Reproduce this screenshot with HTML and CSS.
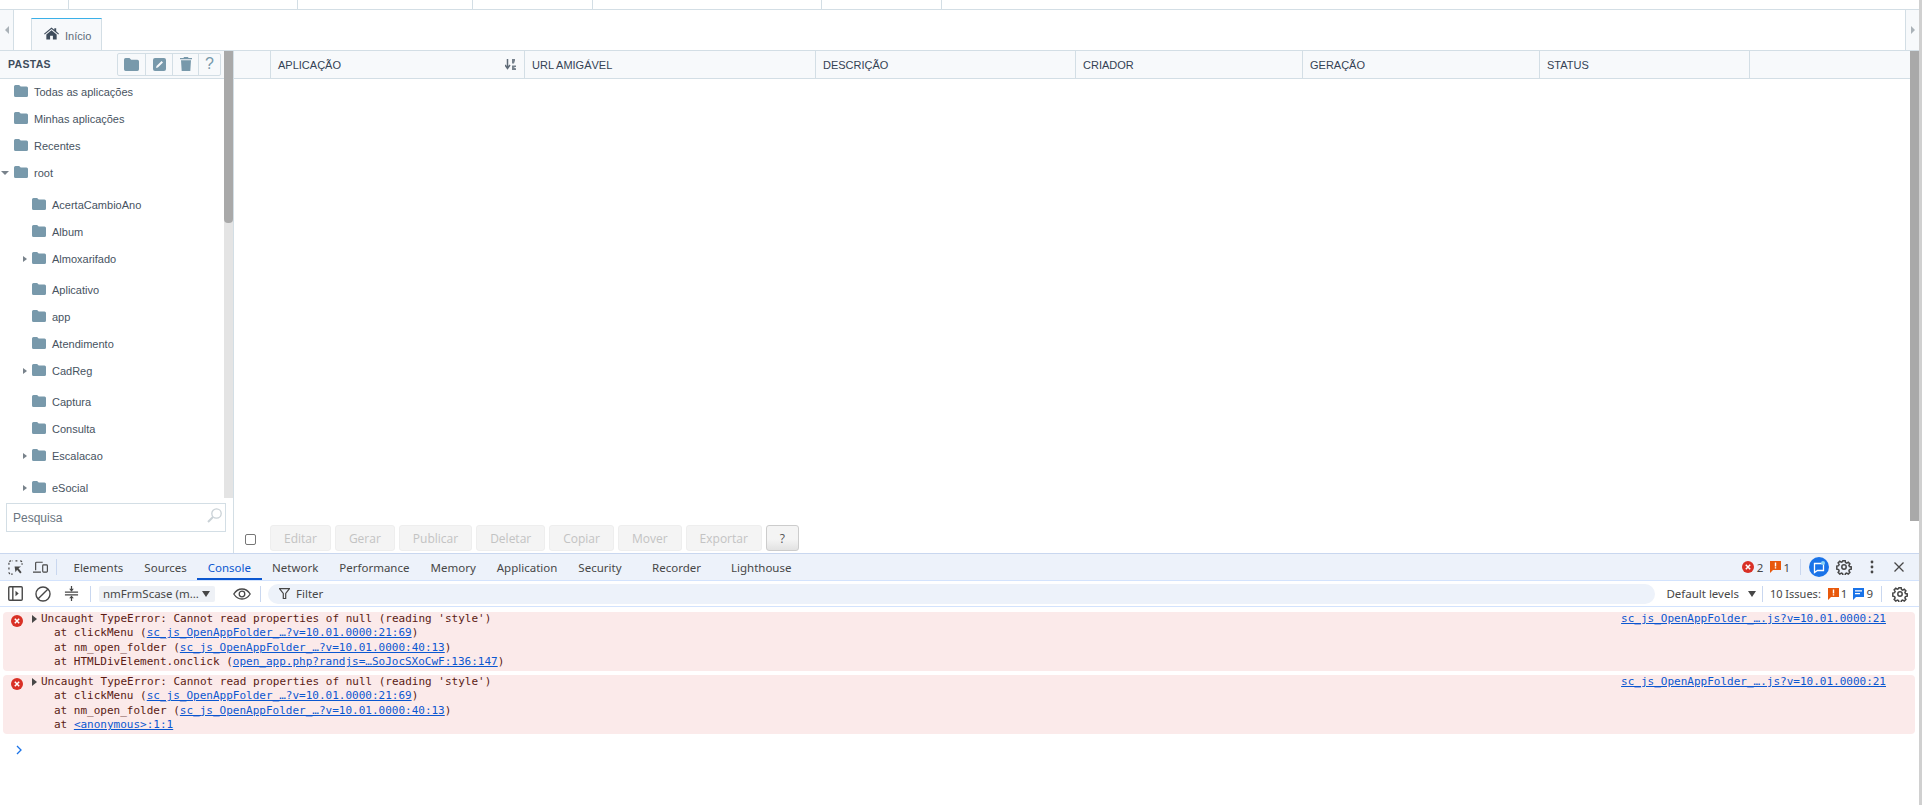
FILE: index.html
```html
<!DOCTYPE html>
<html lang="pt-BR">
<head>
    <meta charset="UTF-8">
    <title>Scriptcase</title>
    <link rel="stylesheet" href="styles.css">
</head>
<body>
    <svg class="defs" width="0" height="0">
        <symbol id="folder" viewBox="0 0 14 12">
            <path d="M1.5 0h3.6l1.6 1.6h5.8A1.5 1.5 0 0 1 14 3.1v7.4a1.5 1.5 0 0 1-1.5 1.5h-11A1.5 1.5 0 0 1 0 10.5v-9A1.5 1.5 0 0 1 1.5 0z"/>
        </symbol>
        <symbol id="err" viewBox="0 0 12 12">
            <circle cx="6" cy="6" r="6" fill="#d93025"/>
            <path d="M3.8 3.8l4.4 4.4M8.2 3.8l-4.4 4.4" stroke="#fff" stroke-width="1.5" fill="none"/>
        </symbol>
        <symbol id="flag-orange" viewBox="0 0 11 12">
            <path d="M0 0h11v9H3l-3 3z" fill="#e8590c"/>
            <path d="M4.8 1.5h1.4v4H4.8zM4.8 6.2h1.4v1.4H4.8z" fill="#fff"/>
        </symbol>
        <symbol id="flag-blue" viewBox="0 0 11 12">
            <path d="M0 0h11v9H3l-3 3z" fill="#1a73e8"/>
            <path d="M2 2.3h7v1.2H2zM2 5h5v1.2H2z" fill="#fff"/>
        </symbol>
        <symbol id="gear" viewBox="0 0 16 16">
            <path d="M6.7 1h2.6l.4 2 1.3.6 1.8-1.1 1.8 1.9-1.1 1.7.6 1.4 2 .4v2.6l-2 .4-.6 1.4 1.1 1.7-1.8 1.9-1.8-1.1-1.3.6-.4 2H6.7l-.4-2-1.3-.6-1.8 1.1-1.8-1.9 1.1-1.7-.6-1.4-2-.4V6.9l2-.4.6-1.4-1.1-1.7 1.8-1.9 1.8 1.1 1.3-.6z" transform="translate(.9 .9) scale(.89)" fill="none" stroke="#474747" stroke-width="1.7"/>
            <circle cx="8" cy="8" r="2.2" fill="none" stroke="#474747" stroke-width="1.5"/>
        </symbol>
    </svg>

    <div class="page">
        <div class="top-strip">
            <div class="strip-cell w1"></div>
            <div class="strip-cell w2"></div>
            <div class="strip-cell w3"></div>
            <div class="strip-cell w4"></div>
            <div class="strip-cell w5"></div>
            <div class="strip-cell w6"></div>
        </div>

        <div class="tabs">
            <div class="tab-arrow left"><span class="tri-left"></span></div>
            <div class="tab">
                <svg class="home" viewBox="0 0 16 13"><path d="M8 0l3 2.5V1h2v3.2L16 6.700l-.8.9L8 1.700.8 7.600 0 6.700zM8 3l5.500 4.500V13H9.500V9h-3v4H2.500V7.500z" fill="#3f4d5c"/></svg>
                <span>Início</span>
            </div>
            <div class="tab-space"></div>
            <div class="tab-arrow right"><span class="tri-right"></span></div>
        </div>

        <div class="main">
            <div class="sidebar">
                <div class="side-upper">
                    <div class="side-col">
                        <div class="side-head">
                            <span class="side-title">PASTAS</span>
                            <div class="btn-group">
                                <div class="group-btn wide">
                                    <svg class="ico16" viewBox="0 0 14 12"><use href="#folder"/></svg>
                                </div>
                                <div class="group-btn">
                                    <svg class="ico13" viewBox="0 0 13 13"><path fill-rule="evenodd" d="M2 0h9a2 2 0 0 1 2 2v9a2 2 0 0 1-2 2H2a2 2 0 0 1-2-2V2a2 2 0 0 1 2-2zm6.600 3L3.500 8.100 3 10l1.900-.5L10 4.400z"/></svg>
                                </div>
                                <div class="group-btn narrow">
                                    <svg class="ico-trash" viewBox="0 0 12 14"><path d="M4 0h4l.5 1H12v1.300H0V1h3.500zM1 3.200h10L10.300 14H1.700z"/></svg>
                                </div>
                                <div class="group-btn help">?</div>
                            </div>
                        </div>
                        <div class="tree">
                            <div class="row"><span class="twisty"></span><svg class="fld"><use href="#folder"/></svg>Todas as aplicações</div>
                            <div class="row"><span class="twisty"></span><svg class="fld"><use href="#folder"/></svg>Minhas aplicações</div>
                            <div class="row"><span class="twisty"></span><svg class="fld"><use href="#folder"/></svg>Recentes</div>
                            <div class="row open wide-gap"><span class="twisty"><i class="tri-down"></i></span><svg class="fld"><use href="#folder"/></svg>root</div>
                            <div class="row child"><span class="twisty"></span><svg class="fld"><use href="#folder"/></svg>AcertaCambioAno</div>
                            <div class="row child"><span class="twisty"></span><svg class="fld"><use href="#folder"/></svg>Album</div>
                            <div class="row child open"><span class="twisty"><i class="tri-right small"></i></span><svg class="fld"><use href="#folder"/></svg>Almoxarifado</div>
                            <div class="row child"><span class="twisty"></span><svg class="fld"><use href="#folder"/></svg>Aplicativo</div>
                            <div class="row child"><span class="twisty"></span><svg class="fld"><use href="#folder"/></svg>app</div>
                            <div class="row child"><span class="twisty"></span><svg class="fld"><use href="#folder"/></svg>Atendimento</div>
                            <div class="row child open"><span class="twisty"><i class="tri-right small"></i></span><svg class="fld"><use href="#folder"/></svg>CadReg</div>
                            <div class="row child"><span class="twisty"></span><svg class="fld"><use href="#folder"/></svg>Captura</div>
                            <div class="row child"><span class="twisty"></span><svg class="fld"><use href="#folder"/></svg>Consulta</div>
                            <div class="row child open wide-gap"><span class="twisty"><i class="tri-right small"></i></span><svg class="fld"><use href="#folder"/></svg>Escalacao</div>
                            <div class="row child"><span class="twisty"><i class="tri-right small"></i></span><svg class="fld"><use href="#folder"/></svg>eSocial</div>
                        </div>
                    </div>
                    <div class="scrollbar side-scroll"><div class="thumb"></div></div>
                </div>
                <div class="search">
                    <span>Pesquisa</span>
                    <svg class="search-ico" viewBox="0 0 15 15"><circle cx="9.500" cy="5.500" r="4.700" fill="none" stroke="#c9d1d6" stroke-width="1.300"/><path d="M6 9l-5 5" stroke="#c9d1d6" stroke-width="2"/></svg>
                </div>
            </div>

            <div class="content">
                <div class="grid-head">
                    <div class="col c0"></div>
                    <div class="col c1">APLICAÇÃO
                        <svg class="sort" viewBox="0 0 11 11"><path d="M2.500 0v8M0 6l2.500 3.500L5 6" fill="none" stroke="#5f6b77" stroke-width="1.500"/><path d="M7 0h3v1.500L9 4.500H7zM7 6.500h4V8H8.500l2.500 1.500V11H7z" fill="#76818c"/></svg>
                    </div>
                    <div class="col c2">URL AMIGÁVEL</div>
                    <div class="col c3">DESCRIÇÃO</div>
                    <div class="col c4">CRIADOR</div>
                    <div class="col c5">GERAÇÃO</div>
                    <div class="col c6">STATUS</div>
                    <div class="col c7"></div>
                </div>
                <div class="grid-body"></div>
                <div class="actions">
                    <span class="check"></span>
                    <button class="act" disabled>Editar</button>
                    <button class="act" disabled>Gerar</button>
                    <button class="act" disabled>Publicar</button>
                    <button class="act" disabled>Deletar</button>
                    <button class="act" disabled>Copiar</button>
                    <button class="act" disabled>Mover</button>
                    <button class="act" disabled>Exportar</button>
                    <button class="act help-btn">?</button>
                </div>
            </div>
            <div class="scrollbar page-scroll"><div class="thumb"></div></div>
        </div>

        <div class="devtools">
            <div class="dt-tabs">
                <svg class="dt-ico first" viewBox="0 0 16 16"><path d="M1 5V3a2 2 0 0 1 2-2h2M8 1h2M1 8v2M1 13a2 2 0 0 0 2 2h2M13 1a2 2 0 0 1 2 2v2" fill="none" stroke="#474747" stroke-width="1.300" stroke-dasharray="2 1.200"/><path d="M7 7h7l-2.800 1.800L14.500 13 13 14.500l-3.300-4L8 13z" fill="#474747"/></svg>
                <svg class="dt-ico" viewBox="0 0 17 14"><path d="M3 10V2a1 1 0 0 1 1-1h7M0 12.300h9" fill="none" stroke="#474747" stroke-width="1.300"/><rect x="11" y="4" width="5.300" height="8.300" rx="1" fill="none" stroke="#474747" stroke-width="1.300"/></svg>
                <span class="dt-sep big"></span>
                <span class="dt-tab">Elements</span>
                <span class="dt-tab">Sources</span>
                <span class="dt-tab active">Console</span>
                <span class="dt-tab">Network</span>
                <span class="dt-tab">Performance</span>
                <span class="dt-tab">Memory</span>
                <span class="dt-tab">Application</span>
                <span class="dt-tab">Security</span>
                <span class="dt-tab exp rec">Recorder</span>
                <span class="dt-tab exp">Lighthouse</span>
                <div class="dt-right">
                    <svg class="s12"><use href="#err"/></svg><span class="num">2</span>
                    <svg class="s12 flag"><use href="#flag-orange"/></svg><span class="num tight">1</span>
                    <span class="dt-sep"></span>
                    <svg class="ai" viewBox="0 0 20 20"><circle cx="10" cy="10" r="10" fill="#1a73e8"/><path d="M5.500 6.500h9v7h-6l-3 2z" fill="none" stroke="#fff" stroke-width="1.300"/><circle cx="14" cy="6" r="2" fill="#8ad4f8"/></svg>
                    <svg class="gear"><use href="#gear"/></svg>
                    <svg class="kebab" viewBox="0 0 4 14"><circle cx="2" cy="2" r="1.400"/><circle cx="2" cy="7" r="1.400"/><circle cx="2" cy="12" r="1.400"/></svg>
                    <svg class="close" viewBox="0 0 10 10"><path d="M.5.500l9 9M9.500.500l-9 9" stroke="#474747" stroke-width="1.300"/></svg>
                </div>
            </div>
            <div class="dt-toolbar">
                <svg class="tb-ico a" viewBox="0 0 14 14"><rect x=".7" y=".7" width="12.600" height="12.600" rx="1" fill="none" stroke="#474747" stroke-width="1.300"/><path d="M4.500 1v12" stroke="#474747" stroke-width="1.300"/><path d="M7 4.500L10 7l-3 2.500z" fill="#474747"/></svg>
                <svg class="tb-ico b" viewBox="0 0 15 15"><circle cx="7.500" cy="7.500" r="6.600" fill="none" stroke="#474747" stroke-width="1.300"/><path d="M3 12L12 3" stroke="#474747" stroke-width="1.300"/></svg>
                <svg class="tb-ico c" viewBox="0 0 14 16"><path d="M0 6.500h14M0 9.500h14M7 0v4M7 12v4" stroke="#474747" stroke-width="1.300"/><path d="M4.500 3h5L7 6zM4.500 13h5L7 10z" fill="#474747"/></svg>
                <span class="dt-sep tb-sep"></span>
                <div class="ctx"><span>nmFrmScase (m…</span><i class="tri-down dark"></i></div>
                <svg class="eye" viewBox="0 0 18 12"><path d="M.8 6C3 2.500 6 1 9 1s6 1.500 8.200 5C15 9.500 12 11 9 11S3 9.500.8 6z" fill="none" stroke="#474747" stroke-width="1.300"/><circle cx="9" cy="6" r="2.800" fill="none" stroke="#474747" stroke-width="1.300"/></svg>
                <span class="dt-sep eye-sep"></span>
                <div class="filter">
                    <svg class="funnel" viewBox="0 0 11 11"><path d="M.5.700h10L6.700 5.500V10.500H4.300V5.500z" fill="none" stroke="#474747" stroke-width="1.200"/></svg>
                    <span>Filter</span>
                </div>
                <span class="levels">Default levels</span><i class="tri-down dark levels-tri"></i>
                <span class="dt-sep"></span>
                <span class="issues">10 Issues:</span>
                <svg class="s12 iss"><use href="#flag-orange"/></svg><span class="num tight">1</span>
                <svg class="s12 iss2"><use href="#flag-blue"/></svg><span class="num tight">9</span>
                <span class="dt-sep end"></span>
                <svg class="gear last"><use href="#gear"/></svg>
            </div>
            <div class="console">
                <div class="msg">
                    <div class="msg-head">
                        <svg class="s12 msg-err"><use href="#err"/></svg><i class="tri-right msg-tri"></i><span class="msg-text">Uncaught TypeError: Cannot read properties of null (reading 'style')</span>
                        <a class="src">sc_js_OpenAppFolder_….js?v=10.01.0000:21</a>
                    </div>
                    <div class="trace">at clickMenu (<a>sc_js_OpenAppFolder_…?v=10.01.0000:21:69</a>)</div>
                    <div class="trace">at nm_open_folder (<a>sc_js_OpenAppFolder_…?v=10.01.0000:40:13</a>)</div>
                    <div class="trace">at HTMLDivElement.onclick (<a>open_app.php?randjs=…SoJocSXoCwF:136:147</a>)</div>
                </div>
                <div class="msg">
                    <div class="msg-head">
                        <svg class="s12 msg-err"><use href="#err"/></svg><i class="tri-right msg-tri"></i><span class="msg-text">Uncaught TypeError: Cannot read properties of null (reading 'style')</span>
                        <a class="src">sc_js_OpenAppFolder_….js?v=10.01.0000:21</a>
                    </div>
                    <div class="trace">at clickMenu (<a>sc_js_OpenAppFolder_…?v=10.01.0000:21:69</a>)</div>
                    <div class="trace">at nm_open_folder (<a>sc_js_OpenAppFolder_…?v=10.01.0000:40:13</a>)</div>
                    <div class="trace">at <a>&lt;anonymous&gt;:1:1</a></div>
                </div>
                <svg class="prompt" viewBox="0 0 6 10"><path d="M1 1l4 4-4 4" fill="none" stroke="#1a73e8" stroke-width="1.300"/></svg>
            </div>
        </div>
    </div>
    <div class="edge"></div>
</body>
</html>
```
FILE: styles.css
```css
* {
    box-sizing: border-box;
}
html, body {
    margin: 0;
    height: 100%;
    overflow: hidden;
}
body {
    display: flex;
    background: #fff;
    font-family: "Liberation Sans", Arial, sans-serif;
    font-size: 11px;
    color: #47535f;
}
.defs {
    position: absolute;
}
.page {
    flex: 1;
    min-width: 0;
    display: flex;
    flex-direction: column;
    height: 805px;
}
.edge {
    width: 3px;
    background: #d0d0d0;
}

/* top strip, cut off by the window */
.top-strip {
    height: 10px;
    display: flex;
    border-bottom: 1px solid #d3dee5;
}
.strip-cell {
    border-right: 1px solid #d3dee5;
}
.w1 { width: 69px; }
.w2 { width: 229px; }
.w3 { width: 175px; }
.w4 { width: 120px; }
.w5 { width: 229px; }
.w6 { width: 120px; }

/* tabs */
.tabs {
    height: 40px;
    display: flex;
    align-items: flex-end;
}
.tab-arrow {
    height: 40px;
    width: 14px;
    background: #f7f9fb;
    display: flex;
    align-items: center;
    justify-content: center;
}
.tab-arrow.left {
    border-right: 1px solid #d3dee5;
    margin-right: 17px;
}
.tab-arrow.right {
    border-left: 1px solid #d3dee5;
}
.tri-left, .tri-right {
    display: inline-block;
    border-top: 4px solid transparent;
    border-bottom: 4px solid transparent;
}
.tri-left {
    border-right: 4px solid #aab2b8;
}
.tri-right {
    border-left: 4px solid #aab2b8;
}
.tri-right.small {
    border-top-width: 3.5px;
    border-bottom-width: 3.5px;
    border-left-color: #78828b;
}
.tri-down {
    display: inline-block;
    border-left: 4px solid transparent;
    border-right: 4px solid transparent;
    border-top: 4px solid #78828b;
}
.tri-down.dark {
    border-top-color: #474747;
    border-left-width: 4.5px;
    border-right-width: 4.5px;
    border-top-width: 6px;
}
.tab {
    width: 71px;
    height: 32px;
    background: #f7f9fb;
    border: 1px solid #d3dee5;
    border-top: 1px solid #3bb0e8;
    border-bottom: 0;
    display: flex;
    align-items: center;
    padding-left: 12px;
    color: #5d6b78;
}
.tab span {
    margin-left: 6px;
    margin-top: 2px;
    font-size: 11px;
}
.home {
    width: 15px;
    height: 13px;
    margin-top: -3px;
}
.tab-space {
    flex: 1;
}

/* main area */
.main {
    height: 503px;
    display: flex;
    border-top: 1px solid #d3dee5;
}
.sidebar {
    width: 234px;
    border-right: 1px solid #d3dee5;
    display: flex;
    flex-direction: column;
}
.side-upper {
    height: 447px;
    display: flex;
}
.side-col {
    flex: 1;
    min-width: 0;
    overflow: hidden;
}
.side-head {
    height: 28px;
    background: #f7f9fb;
    border-bottom: 1px solid #d3dee5;
    display: flex;
    align-items: center;
    justify-content: space-between;
    padding: 0 3px 1px 8px;
}
.side-title {
    font-weight: bold;
    font-size: 10.5px;
    letter-spacing: .3px;
    color: #3f4d5c;
}
.btn-group {
    display: flex;
    height: 23px;
    border: 1px solid #d3dee5;
    border-radius: 2px;
}
.group-btn {
    width: 27px;
    border-right: 1px solid #d3dee5;
    display: flex;
    align-items: center;
    justify-content: center;
    fill: #7899ab;
}
.group-btn.wide {
    width: 28px;
}
.group-btn.narrow {
    width: 26px;
}
.group-btn.help {
    width: 21px;
    border-right: 0;
    color: #7899ab;
    font-size: 16px;
}
.ico16 {
    width: 15px;
    height: 13px;
}
.ico13 {
    width: 13px;
    height: 13px;
}
.ico-trash {
    width: 12px;
    height: 14px;
}
.tree {
    margin-top: -1px;
}
.row {
    height: 27px;
    display: flex;
    align-items: center;
    white-space: nowrap;
}
.row.open {
    margin-bottom: 4px;
}
.row.wide-gap {
    margin-bottom: 5px;
}
.twisty {
    width: 14px;
    flex: none;
    display: flex;
    justify-content: flex-end;
    padding-right: 5px;
}
.row.child .twisty {
    width: 32px;
}
.fld {
    width: 14px;
    height: 12px;
    fill: #7899ab;
    margin: -1px 6px 0 0;
    flex: none;
}
.scrollbar {
    width: 9px;
    flex: none;
    background: #e4e4e4;
}
.thumb {
    background: #a9a9a9;
    border-radius: 0 0 4px 4px;
}
.side-scroll .thumb {
    height: 172px;
}
.page-scroll {
    background: #fff;
}
.page-scroll .thumb {
    height: 470px;
    border-radius: 0;
}
.search {
    height: 29px;
    margin: 5px 7px 0 6px;
    border: 1px solid #d3dee5;
    display: flex;
    align-items: center;
    justify-content: space-between;
    padding: 0 3px 0 6px;
    font-size: 12px;
    color: #6a7580;
}
.search-ico {
    width: 15px;
    height: 15px;
    margin-top: -4px;
}

/* grid */
.content {
    flex: 1;
    min-width: 0;
    display: flex;
    flex-direction: column;
}
.grid-head {
    height: 28px;
    background: #f7f9fb;
    border-bottom: 1px solid #d3dee5;
    display: flex;
    color: #344254;
}
.col {
    border-right: 1px solid #d3dee5;
    padding: 0 7px;
    display: flex;
    align-items: center;
    justify-content: space-between;
    flex: none;
}
.c0 { width: 37px; }
.c1 { width: 254px; }
.c2 { width: 291px; }
.c3 { width: 260px; }
.c4 { width: 227px; }
.c5 { width: 237px; }
.c6 { width: 210px; }
.c7 { flex: 1; border-right: 0; }
.sort {
    width: 11px;
    height: 11px;
    margin-right: 1px;
}
.grid-body {
    flex: 1;
}
.actions {
    height: 26px;
    margin-bottom: 2px;
    display: flex;
    align-items: center;
    gap: 4px;
    padding-left: 11px;
}
.check {
    width: 11px;
    height: 11px;
    border: 1px solid #767676;
    border-radius: 2px;
    margin: 2px 10px 0 0;
    background: #fff;
}
.act {
    height: 26px;
    padding: 0 13px;
    font-family: "Open Sans", sans-serif;
    font-size: 12px;
    background: #f4f4f4;
    border: 1px solid #eeeeee;
    border-radius: 3px;
    color: #c3c3c3;
}
.help-btn {
    width: 33px;
    padding: 0;
    background: linear-gradient(#f4f4f4 55%, #e2e2e2);
    border-color: #cccccc;
    color: #555;
}

/* devtools */
.devtools {
    flex: 1;
    display: flex;
    flex-direction: column;
    border-top: 1px solid #c9d7ef;
    font-family: "Noto Sans", "Open Sans", sans-serif;
    font-size: 11.5px;
    color: #474747;
}
.dt-tabs {
    height: 27px;
    background: #edf2fa;
    display: flex;
    align-items: center;
    border-bottom: 1px solid #d3e3fd;
}
.dt-ico {
    width: 15px;
    height: 15px;
    margin-left: 10px;
    flex: none;
}
.dt-ico.first {
    margin-left: 8px;
}
.dt-sep {
    width: 1px;
    height: 16px;
    background: #c9d7ef;
    flex: none;
}
.dt-sep.big {
    margin: 0 6px 0 8px;
}
.dt-tab {
    height: 26px;
    padding: 0 10.5px;
    display: flex;
    align-items: center;
    white-space: nowrap;
}
.dt-tab.active {
    color: #0b57d0;
    box-shadow: inset 0 -2px 0 #0b57d0;
}
.dt-tab.exp {
    padding: 0 15px;
}
.dt-tab.rec {
    margin-left: 5px;
}
.dt-right {
    margin-left: auto;
    display: flex;
    align-items: center;
    padding-right: 15px;
}
.s12 {
    width: 12px;
    height: 12px;
    flex: none;
}
.num {
    margin-left: 3px;
}
.num.tight {
    margin-left: 2px;
}
.s12.flag {
    width: 11px;
    margin-left: 7px;
}
.dt-right .dt-sep {
    margin: 0 8px 0 10px;
}
.ai {
    width: 20px;
    height: 20px;
}
.gear {
    width: 16px;
    height: 16px;
    flex: none;
    margin-left: 7px;
}
.kebab {
    width: 4px;
    height: 14px;
    margin-left: 18px;
    fill: #474747;
}
.close {
    width: 10px;
    height: 10px;
    margin-left: 20px;
}
.dt-toolbar {
    height: 26px;
    display: flex;
    align-items: center;
    border-bottom: 1px solid #d3e3fd;
}
.tb-ico {
    flex: none;
    height: 15px;
    width: 15px;
}
.tb-ico.a {
    margin-left: 8px;
}
.tb-ico.b {
    width: 16px;
    height: 16px;
    margin-left: 12px;
}
.tb-ico.c {
    margin-left: 13px;
}
.tb-sep {
    margin: 0 8px 0 11px;
}
.ctx {
    width: 116px;
    height: 16px;
    background: #eef1f6;
    display: flex;
    align-items: center;
    justify-content: space-between;
    padding: 0 5px 0 4px;
    border-radius: 2px;
    white-space: nowrap;
    flex: none;
}
.eye {
    width: 18px;
    height: 12px;
    margin-left: 18px;
    flex: none;
}
.eye-sep {
    margin: 0 7px 0 9px;
}
.filter {
    flex: 1;
    height: 20px;
    background: #edf2fa;
    border-radius: 10px;
    display: flex;
    align-items: center;
    padding-left: 11px;
}
.funnel {
    width: 11px;
    height: 11px;
    margin-right: 6px;
}
.levels {
    margin-left: 11px;
    white-space: nowrap;
}
.levels-tri {
    margin: 0 6px 0 9px;
}
.issues {
    margin: 0 7px;
    font-size: 11px;
    white-space: nowrap;
}
.s12.iss, .s12.iss2 {
    width: 11px;
}
.s12.iss2 {
    margin-left: 6px;
}
.dt-sep.end {
    margin: 0 10px 0 8px;
}
.gear.last {
    margin: 0 11px 0 0;
}

/* console */
.console {
    flex: 1;
    padding: 5px 4px 0 3px;
    font-family: "DejaVu Sans Mono", "Liberation Mono", monospace;
    font-size: 11px;
    line-height: 14.4px;
    color: #5a1b14;
}
.msg {
    height: 59px;
    margin-bottom: 4px;
    background: #fbeaea;
    border-radius: 4px;
}
.msg-head {
    display: flex;
    align-items: center;
    height: 14.4px;
    white-space: pre;
}
.msg-err {
    margin: 4px 0 0 8px;
}
.msg-tri {
    margin: 0 4px 0 9px;
    border-left: 5px solid #474747;
}
.src {
    margin-left: auto;
    margin-right: 29px;
}
.trace {
    padding-left: 51px;
    white-space: pre;
}
a {
    color: #0b57d0;
    text-decoration: underline;
}
.prompt {
    display: block;
    width: 6px;
    height: 10px;
    margin: 11px 0 0 13px;
}
```
